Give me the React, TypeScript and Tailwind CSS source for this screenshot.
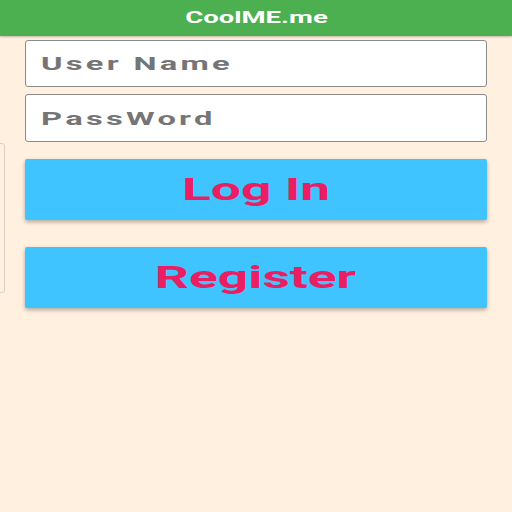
import React from "react";

export default function App() {
  return (
    <div className="w-[512px] h-[512px] bg-[#fff0df] overflow-hidden flex flex-col relative" style={{ fontFamily: "Roboto, 'Liberation Sans', sans-serif" }}>
      <div className="h-9 shrink-0 bg-[#4caf50] flex items-center justify-center shadow-[0_1px_2px_rgba(0,0,0,0.25)] z-10">
        <span className="inline-block scale-x-[1.72] text-white font-bold text-[16px] leading-none">CoolME.me</span>
      </div>
      <div className="absolute left-[-8px] top-[143px] w-[13px] h-[150px] border border-[#d8d0c6] rounded-[3px]" />
      <div className="flex flex-col px-[25px] pt-1">
        <div className="h-[47px] bg-white border border-[#8a8a8a] rounded-[3px] flex items-center pl-[15px]">
          <span className="inline-block origin-left scale-x-[1.72] text-[#757575] font-bold text-[19px] tracking-[0.1em] leading-none">User Name</span>
        </div>
        <div className="h-[48px] mt-[7px] bg-white border border-[#8a8a8a] rounded-[3px] flex items-center pl-[15px]">
          <span className="inline-block origin-left scale-x-[1.72] text-[#757575] font-bold text-[19px] tracking-[0.1em] leading-none">PassWord</span>
        </div>
        <button className="mt-[17px] h-[61px] bg-[#40c4ff] rounded-[2px] shadow-[0_2px_4px_rgba(0,0,0,0.3)] flex items-center justify-center">
          <span className="inline-block scale-x-[1.72] text-[#e91e63] font-bold text-[31px] leading-none">Log In</span>
        </button>
        <button className="mt-[27px] h-[61px] bg-[#40c4ff] rounded-[2px] shadow-[0_2px_4px_rgba(0,0,0,0.3)] flex items-center justify-center">
          <span className="inline-block scale-x-[1.72] text-[#e91e63] font-bold text-[31px] leading-none">Register</span>
        </button>
      </div>
    </div>
  );
}
